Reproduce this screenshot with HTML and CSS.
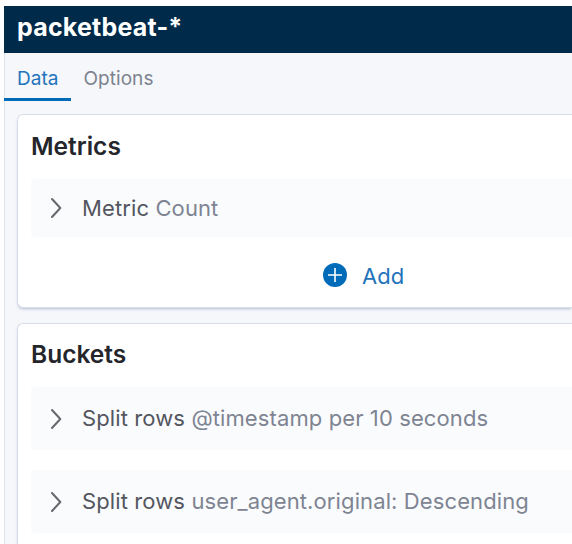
FILE: index.html
```html
<!DOCTYPE html>
<html lang="en">
<head>
<meta charset="utf-8">
<title>packetbeat-*</title>
<link rel="stylesheet" href="styles.css">
</head>
<body>
<main class="editor">
  <header class="index-title"><span>packetbeat-*</span></header>
  <nav class="tabs">
    <a class="tab tab-active"><span>Data</span></a>
    <a class="tab"><span>Options</span></a>
  </nav>
  <div class="panels">
    <section class="panel metrics">
      <h2><span>Metrics</span></h2>
      <div class="agg">
        <svg class="arrow" viewBox="0 0 12 22"><path d="M2 2 10.3 11 2 20"/></svg>
        <p><span class="kind">Metric</span> <span class="detail">Count</span></p>
      </div>
      <div class="add">
        <svg class="plus" viewBox="0 0 24 24"><circle cx="12" cy="12" r="12"/><path d="M12 5v14M5 12h14"/></svg>
        <span>Add</span>
      </div>
    </section>
    <section class="panel buckets">
      <h2><span>Buckets</span></h2>
      <div class="agg">
        <svg class="arrow" viewBox="0 0 12 22"><path d="M2 2 10.3 11 2 20"/></svg>
        <p><span class="kind">Split rows</span> <span class="detail">@timestamp per 10 seconds</span></p>
      </div>
      <div class="agg">
        <svg class="arrow" viewBox="0 0 12 22"><path d="M2 2 10.3 11 2 20"/></svg>
        <p><span class="kind">Split rows</span> <span class="detail">user_agent.original: Descending</span></p>
      </div>
    </section>
  </div>
</main>
</body>
</html>
```
FILE: styles.css
```css
* { box-sizing: border-box; }
body {
  margin: 0;
  height: 544px;
  overflow: hidden;
  background: #fff;
  font-family: Inter, "Liberation Sans", sans-serif;
}
.editor {
  height: 538px;
  margin: 6px 0 0 4px;
  overflow: hidden;
  border-left: 1px solid #dfe3ec;
  background: #f5f7fb;
}
.index-title {
  height: 47px;
  padding: 0 0 5px 12px;
  display: flex;
  align-items: center;
  background: #002a4a;
  box-shadow: -1px 0 #002a4a;
  color: #fff;
  font-size: 25px;
  font-weight: 700;
  letter-spacing: .2px;
}
.editor { border-left: 0; box-shadow: inset 1px 0 #dfe3ec; padding-left: 1px; }
.index-title { margin-left: -1px; padding-left: 13px; }
.tabs {
  height: 48px;
  margin-left: -1px;
  display: flex;
}
.tab {
  padding: 0 13px;
  line-height: 51px;
  font-size: 19px;
  letter-spacing: .05px;
  color: #7d838e;
}
.tab-active {
  width: 66.5px;
  color: #2373bb;
  border-bottom: 3px solid #006bb8;
}
.panels {
  padding: 13px 0 0 12px;
}
.panel {
  padding: 0 0 0 13px;
  background: #fff;
  border: 1px solid #d7deea;
  border-right: 0;
  border-radius: 6px 0 0 6px;
  box-shadow: 0 2px 3px -1px rgba(105, 120, 150, .45);
}
.metrics { height: 194px; }
.buckets { height: 240px; margin-top: 15px; }
h2 {
  margin: 0;
  height: 64px;
  line-height: 62px;
  font-size: 24.5px;
  font-weight: 600;
  color: #24262b;
}
.buckets h2 { height: 63px; line-height: 61px; }
.agg {
  height: 58px;
  padding-left: 19px;
  display: flex;
  align-items: center;
  gap: 20px;
  background: #fafbfd;
  border-radius: 4px 0 0 4px;
}
.metrics .agg p { padding-bottom: 1px; }
.buckets .agg { height: 63px; margin-bottom: 20px; }
.buckets .agg p { padding-bottom: 2px; }
.agg p { margin: 0; font-size: 22px; letter-spacing: .11px; white-space: nowrap; }
.kind { color: #53565e; }
.detail { color: #7e8492; }
.arrow { width: 12px; height: 22px; fill: none; stroke: #65676d; stroke-width: 2; stroke-linecap: round; stroke-linejoin: round; }
.add {
  height: 70px;
  padding: 5px 0 0 292px;
  display: flex;
  align-items: center;
  gap: 15px;
  font-size: 22px;
  color: #2373bb;
}
.add span { padding-top: 2px; }
.plus { width: 24px; height: 24px; fill: #006bb8; }
.plus path { stroke: #fff; stroke-width: 1.6; }
```
